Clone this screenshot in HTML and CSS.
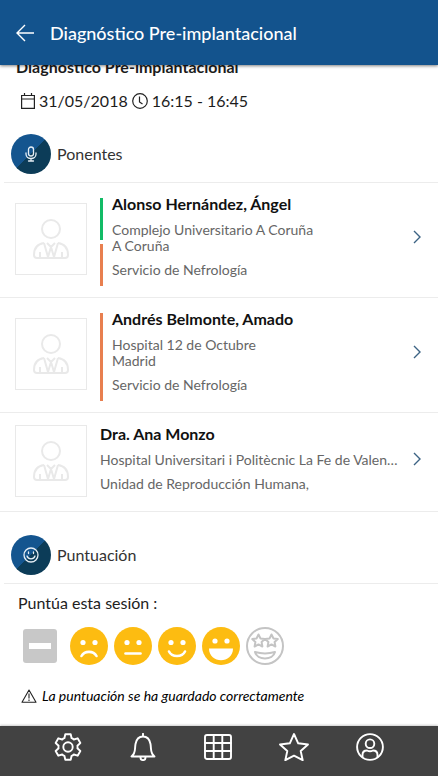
FILE: index.html
```html
<!DOCTYPE html>
<html lang="es">
<head>
<meta charset="utf-8">
<meta name="viewport" content="width=device-width, initial-scale=1">
<title>Diagnóstico Pre-implantacional</title>
<link rel="stylesheet" href="styles.css">
</head>
<body>
<svg class="defs" aria-hidden="true">
  <symbol id="person" viewBox="0 0 36 42">
    <circle cx="18" cy="11" r="9"/>
    <path d="M11 25C4 26 1 31 1 37c0 2 1 3 3 3h28c2 0 3-1 3-3 0-6-3-11-10-12"/>
    <path d="M11 25l4 14 3-10 3 10 4-14M14 25l4 4 4-4M7 34v5M29 34v5"/>
  </symbol>
  <symbol id="chevron" viewBox="0 0 8 14"><path d="M1 1l6 6-6 6"/></symbol>
</svg>

<header class="topbar">
  <button class="back" type="button" aria-label="Volver">
    <svg width="18" height="18" viewBox="0 0 18 18"><path d="M9 1L1 9l8 8M1 9h17"/></svg>
  </button>
  <h1 class="topbar-title">Diagnóstico Pre-implantacional</h1>
</header>

<main class="content">
  <h2 class="session-title">Diagnóstico Pre-implantacional</h2>
  <p class="when">
    <svg width="14" height="16" viewBox="0 0 14 16"><path d="M.6 2.5h12.8v12.8H.6zM.6 6h12.8M3.5 0v2.5M10.5 0v2.5"/></svg>
    <span>31/05/2018</span>
    <svg width="16" height="16" viewBox="0 0 16 16"><circle cx="8" cy="8" r="7.3"/><path d="M7.5 3.500V9l3 2"/></svg>
    <span>16:15 - 16:45</span>
  </p>

  <section>
    <h3 class="section-head">
      <span class="disc"><svg width="12" height="16" viewBox="0 0 12 16"><rect x="3.5" y="1" width="5" height="9" rx="2.5"/><path d="M1 7v1c0 6 10 6 10 0V7M6 12.500V15M3.500 15h5"/></svg></span>
      Ponentes
    </h3>
    <ul class="speakers">
      <li><a class="speaker" href="#">
        <span class="photo"><svg><use href="#person"/></svg></span>
        <span class="stripes"><i class="green"></i><i class="orange"></i></span>
        <span class="info">
          <strong class="name">Alonso Hernández, Ángel</strong>
          <span class="place">Complejo Universitario A Coruña<br>A Coruña</span>
          <span class="unit">Servicio de Nefrología</span>
        </span>
        <svg class="chevron"><use href="#chevron"/></svg>
      </a></li>
      <li><a class="speaker" href="#">
        <span class="photo"><svg><use href="#person"/></svg></span>
        <span class="stripes"><i class="orange"></i></span>
        <span class="info">
          <strong class="name">Andrés Belmonte, Amado</strong>
          <span class="place">Hospital 12 de Octubre<br>Madrid</span>
          <span class="unit">Servicio de Nefrología</span>
        </span>
        <svg class="chevron"><use href="#chevron"/></svg>
      </a></li>
      <li><a class="speaker plain" href="#">
        <span class="photo"><svg><use href="#person"/></svg></span>
        <span class="info">
          <strong class="name">Dra. Ana Monzo</strong>
          <span class="place">Hospital Universitari i Politècnic La Fe de Valencia</span>
          <span class="unit">Unidad de Reproducción Humana,</span>
        </span>
        <svg class="chevron"><use href="#chevron"/></svg>
      </a></li>
    </ul>
  </section>

  <section class="rating">
    <h3 class="section-head">
      <span class="disc"><svg width="16" height="16" viewBox="0 0 16 16"><circle cx="8" cy="8" r="7"/><path d="M4 9c1.300 3.800 6.700 3.800 8 0M5.500 5v1.500M10.500 5v1.500"/></svg></span>
      Puntuación
    </h3>
    <p class="question">Puntúa esta sesión :</p>
    <div class="scores">
      <button class="score clear" type="button" aria-label="Sin puntuación"><svg width="36" height="36" viewBox="0 0 36 36"><rect x="1" y="1" width="34" height="34" rx="3" fill="#c8c8c8"/><path d="M7 15h22v6H7z" fill="#fff"/></svg></button>
      <button class="score" type="button" aria-label="1"><svg width="38" height="38" viewBox="0 0 38 38"><circle cx="19" cy="19" r="19" fill="#fdbc11"/><circle cx="13" cy="15.500" r="2.600" fill="#fff"/><circle cx="25" cy="15.500" r="2.600" fill="#fff"/><path class="mouth" d="M11.500 29c3-5.500 12-5.500 15 0"/></svg></button>
      <button class="score" type="button" aria-label="2"><svg width="38" height="38" viewBox="0 0 38 38"><circle cx="19" cy="19" r="19" fill="#fdbc11"/><circle cx="13" cy="15.500" r="2.600" fill="#fff"/><circle cx="25" cy="15.500" r="2.600" fill="#fff"/><path class="mouth" d="M11.500 26.500h15"/></svg></button>
      <button class="score" type="button" aria-label="3"><svg width="38" height="38" viewBox="0 0 38 38"><circle cx="19" cy="19" r="19" fill="#fdbc11"/><circle cx="13" cy="15.500" r="2.600" fill="#fff"/><circle cx="25" cy="15.500" r="2.600" fill="#fff"/><path class="mouth" d="M11 24.500c3 6 13 6 16 0"/></svg></button>
      <button class="score" type="button" aria-label="4"><svg width="38" height="38" viewBox="0 0 38 38"><circle cx="19" cy="19" r="19" fill="#fdbc11"/><circle cx="13" cy="14" r="2.600" fill="#fff"/><circle cx="25" cy="14" r="2.600" fill="#fff"/><path d="M7 21.500h24c0 15.500-24 15.500-24 0z" fill="#fff"/></svg></button>
      <button class="score" type="button" aria-label="5"><svg width="38" height="38" viewBox="0 0 38 38" fill="none" stroke="#c4c4c4" stroke-width="2" stroke-linejoin="round"><circle cx="19" cy="19" r="18"/><path d="M12.500 7.500l2 4 4.300.6-3.200 3 .8 4.400-3.900-2.100-3.900 2.100.8-4.400-3.200-3 4.300-.6zM25.500 7.500l2 4 4.300.6-3.200 3 .8 4.400-3.900-2.100-3.900 2.100.8-4.400-3.200-3 4.300-.6zM9 25c6 1.700 14 1.700 20 0-2 8.500-18 8.500-20 0z"/></svg></button>
    </div>
    <p class="notice" role="status">
      <svg width="16" height="14" viewBox="0 0 16 14"><path d="M8 1l7 12.300H1zM8 4.500v5M8 10.500v1.500"/></svg>
      La puntuación se ha guardado correctamente
    </p>
  </section>
</main>

<nav class="tabs">
  <a href="#" aria-label="Ajustes"><svg width="28" height="28" viewBox="0 0 28 28"><path d="M10.400 5.200L11.300 1.300h5.400l.9 3.900q1.200.3 2.200 1.300l3.850-1.200 2.700 4.700-2.950 2.700q.4 1.300 0 2.600l2.950 2.700-2.700 4.700-3.850-1.200q-1 1-2.200 1.300l-.9 3.900h-5.400l-.9-3.900q-1.200-.3-2.200-1.300l-3.850 1.200-2.700-4.700 2.950-2.700q-.4-1.300 0-2.600L1.650 10l2.700-4.700L8.200 6.500q1-1 2.200-1.300z"/><circle cx="14" cy="14" r="4.700"/></svg></a>
  <a href="#" aria-label="Avisos"><svg width="28" height="28" viewBox="0 0 28 28"><path d="M14 .8V3M2.500 23.500h23C21 20 22.500 17 21.500 11 20.500 5.500 18 3.500 14 3.500S7.500 5.500 6.500 11c-1 6 .5 9-4 12.500zM11.500 24.500c0 3.500 5 3.500 5 0"/></svg></a>
  <a href="#" aria-label="Programa"><svg width="28" height="28" viewBox="0 0 28 28"><rect x="1" y="2" width="26" height="24" rx="2"/><path d="M1 10h26M1 18h26M9.700 2v24M18.300 2v24"/></svg></a>
  <a href="#" aria-label="Favoritos"><svg width="30" height="28" viewBox="0 0 30 28"><path d="M15 1l4.200 9.300 9.800 1.200-7.300 6.500 2 9.200L15 22.600l-8.700 4.600 2-9.200L1 11.500l9.800-1.200z"/></svg></a>
  <a href="#" aria-label="Perfil"><svg width="28" height="28" viewBox="0 0 28 28"><circle cx="14" cy="14" r="12.900"/><circle cx="14" cy="10.700" r="4.300"/><path d="M6.500 24v-2c0-3 2-4.500 4.500-4.500 2 1 4 1 6 0 2.500 0 4.500 1.500 4.500 4.500v2"/></svg></a>
</nav>
</body>
</html>
```

FILE: styles.css
```css
* { box-sizing: border-box; }

body {
  margin: 0;
  height: 100vh;
  display: flex;
  flex-direction: column;
  background: #fff;
  color: #1c1c1c;
  font-family: Lato, "Liberation Sans", sans-serif;
  font-size: 16px;
  line-height: 20px;
}

h1, h2, h3, p, ul { margin: 0; padding: 0; font-weight: 400; }
ul { list-style: none; }
button { padding: 0; border: 0; background: none; }
a { color: inherit; text-decoration: none; }
svg { display: block; flex: none; }
.defs { display: none; }

.topbar {
  flex: none;
  display: flex;
  align-items: center;
  gap: 16px;
  height: 65px;
  padding: 0 16px;
  background: #13538d;
  color: #fff;
  box-shadow: 0 1px 3px rgba(0, 0, 0, .5);
  z-index: 1;
}
.back svg { fill: none; stroke: #fff; stroke-width: 1.4; }
.topbar-title { font-size: 18px; font-weight: 500; }

.content { flex: 1; min-height: 0; overflow: hidden; }
.session-title {
  margin: -8px 16px 0;
  font-size: 16px;
  font-weight: 700;
}
.when {
  display: flex;
  align-items: center;
  gap: 4px;
  margin: 14px 21px 0;
}
.when svg { fill: none; stroke: #222; stroke-width: 1.2; }

.section-head {
  display: flex;
  align-items: center;
  gap: 6px;
  height: 58px;
  margin: 14px 0 0 4px;
  padding-left: 7px;
  border-bottom: 1px solid #ececec;
  font-size: 16px;
  color: #333;
}
.disc {
  display: grid;
  place-items: center;
  width: 40px;
  height: 40px;
  border-radius: 50%;
  background: linear-gradient(135deg, #14558f 50%, #0c3c58 50%);
}
.disc svg { fill: none; stroke: #e6eef5; stroke-width: 1.3; stroke-linecap: round; }

.speaker {
  display: flex;
  padding: 15px 17px 11px 15px;
  border-bottom: 1px solid #ececec;
}
.photo {
  flex: none;
  align-self: flex-start;
  display: grid;
  place-items: center;
  width: 72px;
  height: 72px;
  margin-top: 5px;
  border: 1px solid #e9e9e9;
}
.photo svg {
  width: 36px;
  height: 42px;
  fill: none;
  stroke: #e9e9e9;
  stroke-width: 2;
  stroke-linejoin: round;
}
.stripes {
  flex: none;
  display: flex;
  flex-direction: column;
  gap: 4px;
  width: 3px;
  margin-left: 13px;
}
.stripes i { flex: 1; }
.green { background: #12bb66; }
.orange { background: #e87f4f; }
.info {
  flex: 1;
  min-width: 0;
  display: flex;
  flex-direction: column;
  gap: 8px;
  margin-left: 9px;
  padding-bottom: 8px;
  font-size: 14px;
  line-height: 16px;
  color: #666;
}
.name {
  margin-top: -4px;
  font-size: 16px;
  line-height: 20px;
  color: #111;
}
.chevron {
  align-self: center;
  width: 8px;
  height: 14px;
  margin-bottom: 10px;
  fill: none;
  stroke: #3c6384;
  stroke-width: 1.4;
}
.plain .photo { margin-top: -3px; }
.plain .info { margin-left: 13px; }
.plain .place {
  margin-right: 12px;
  overflow: hidden;
  white-space: nowrap;
  text-overflow: ellipsis;
}

.question { margin: 9px 18px 0; color: #222; }
.scores {
  display: flex;
  align-items: center;
  gap: 6px;
  margin: 14px 22px 0;
}
.clear { margin-right: 6px; }
.mouth { fill: none; stroke: #fff; stroke-width: 2.6; stroke-linecap: round; }
.notice {
  display: flex;
  align-items: center;
  gap: 5px;
  margin: 21px 21px 0;
  font-size: 14px;
  font-style: italic;
  color: #000;
}
.notice svg { fill: none; stroke: #222; stroke-width: 1.1; stroke-linejoin: round; }

.tabs {
  flex: none;
  display: flex;
  justify-content: space-around;
  height: 50px;
  padding: 7px 30px 0;
  background: #424242;
  box-shadow: 0 -1px 2px rgba(0, 0, 0, .2);
}
.tabs svg {
  fill: none;
  stroke: #fff;
  stroke-width: 1.9;
  stroke-linejoin: round;
  stroke-linecap: round;
}
```
